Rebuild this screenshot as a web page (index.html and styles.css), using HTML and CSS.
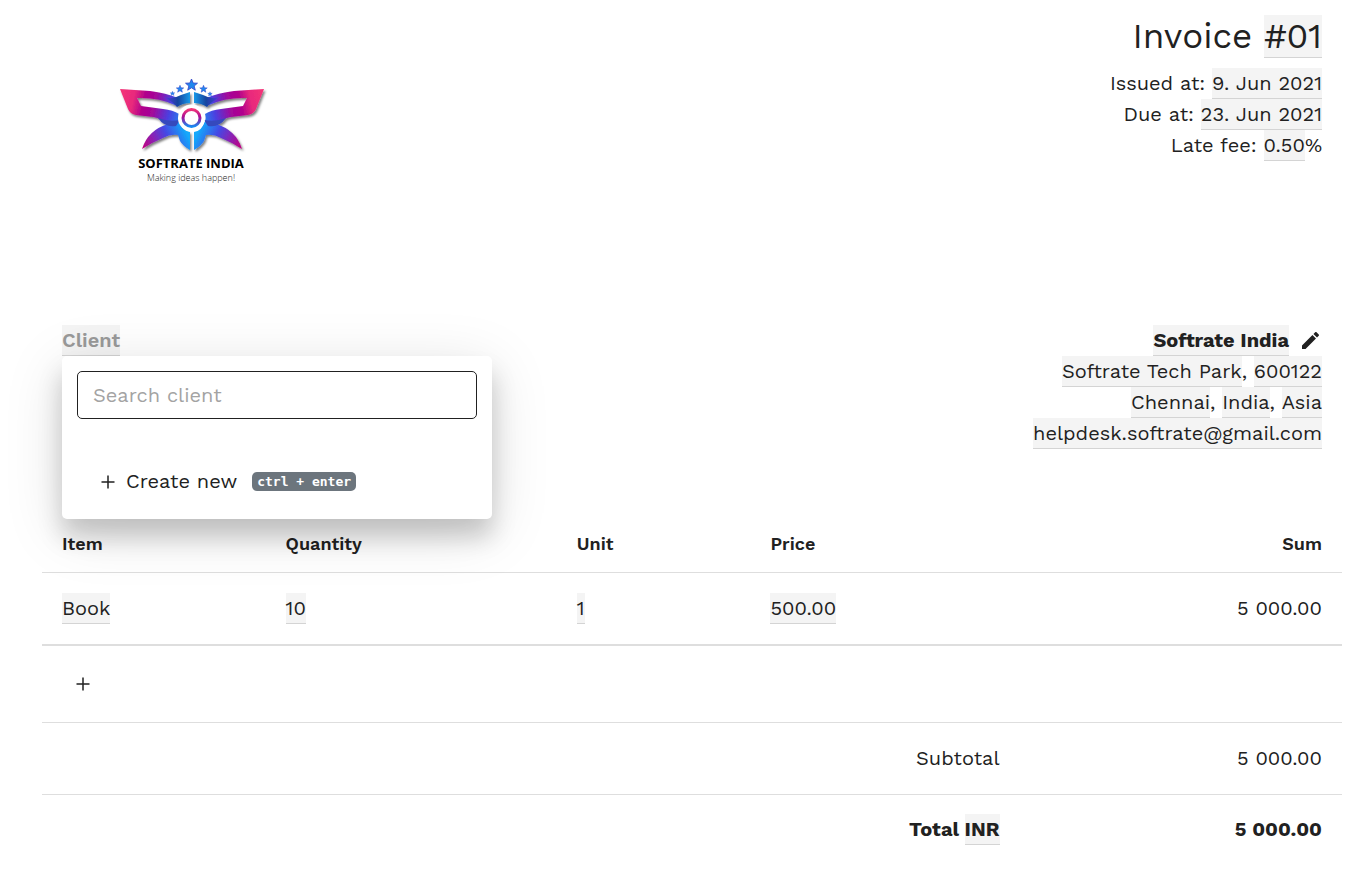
FILE: index.html
```html
<!DOCTYPE html>
<html lang="en">
<head>
<meta charset="utf-8">
<title>Invoice #01</title>
<link rel="stylesheet" href="styles.css">
</head>
<body>
<main class="invoice">
  <header class="top">
    <svg class="logo" viewBox="62 15 260 260" role="img" aria-label="Softrate India logo">
      <defs>
        <linearGradient id="wing" gradientUnits="userSpaceOnUse" x1="120" y1="92" x2="191" y2="108">
          <stop offset="0" stop-color="#f43377"/><stop offset=".2" stop-color="#e82a7c"/><stop offset=".35" stop-color="#b0008c"/><stop offset=".5" stop-color="#a3089a"/><stop offset=".72" stop-color="#4b3fe0"/><stop offset="1" stop-color="#12a5f5"/>
        </linearGradient>
        <linearGradient id="tail" gradientUnits="userSpaceOnUse" x1="143" y1="148" x2="184" y2="128">
          <stop offset="0" stop-color="#c1007e"/><stop offset=".3" stop-color="#8a22b4"/><stop offset=".6" stop-color="#4548e4"/><stop offset="1" stop-color="#12a8fb"/>
        </linearGradient>
        <linearGradient id="crest" gradientUnits="userSpaceOnUse" x1="165" y1="98" x2="191" y2="98">
          <stop offset="0" stop-color="#4b3bd8"/><stop offset=".5" stop-color="#17449f"/><stop offset="1" stop-color="#12a0ef"/>
        </linearGradient>
        <linearGradient id="ring" x1="0" y1="0" x2="0" y2="1">
          <stop offset="0" stop-color="#f03478"/><stop offset=".45" stop-color="#a80d98"/><stop offset="1" stop-color="#1789f2"/>
        </linearGradient>
        <filter id="shade" x="-10%" y="-10%" width="125%" height="130%">
          <feDropShadow dx="1.500" dy="2" stdDeviation="1" flood-color="#000" flood-opacity=".5"/>
        </filter>
        <g id="half">
          <path fill="url(#wing)" d="M120 89 L150 91 Q166 93 178 98 L175 105 Q158 97 137 98 L141 106 L163 109 Q173 110 179 114 Q177 120 181 126 L176 128 Q170 126 165 123 Q160 118 153 117 L136 115 Q130 114 128 109 Z"/>
          <path fill="url(#crest)" d="M164 97 Q172 100 181 95 L190 92 V103 Q183 103 177 107 Q172 101 164 97 Z"/>
          <path fill="url(#tail)" d="M142 149 Q148 130 168 124 L179 121 Q182 131 190 132 V150 Q183 146 180 141 L178 135 Q170 134 163 138 Q153 142 142 149 Z"/>
          <path fill="#3549bd" d="M158 118 Q168 122 180 120 L176 126 Q165 128 158 118 Z"/>
        </g>
        <path id="star" d="M0-6 L1.700-2 L6-1.800 L2.700 1 L3.800 5.200 L0 2.800 L-3.800 5.200 L-2.700 1 L-6-1.800 L-1.700-2 Z"/>
      </defs>
      <g filter="url(#shade)">
        <use href="#half"/>
        <use href="#half" transform="translate(384 0) scale(-1 1)"/>
      </g>
      <circle cx="191.500" cy="118" r="13.500" fill="#fff"/>
      <circle cx="191.500" cy="118" r="8.500" fill="none" stroke="url(#ring)" stroke-width="3"/>
      <g fill="#2086ee" stroke="#3441c7" stroke-width=".8">
        <use href="#star" transform="translate(191.500 85)"/>
        <use href="#star" transform="translate(180 89) scale(.62)"/>
        <use href="#star" transform="translate(203.500 89) scale(.62)"/>
        <use href="#star" transform="translate(172.500 93.500) scale(.38)"/>
        <use href="#star" transform="translate(210 94) scale(.38)"/>
      </g>
      <text class="logo-name" x="191" y="168">SOFTRATE INDIA</text>
      <text class="logo-motto" x="191" y="181">Making ideas happen!</text>
    </svg>
    <div class="meta">
      <h1 class="title">Invoice <span class="edit">#01</span></h1>
      <p>Issued at: <span class="edit">9. Jun 2021</span></p>
      <p>Due at: <span class="edit">23. Jun 2021</span></p>
      <p>Late fee: <span class="edit">0.50</span>%</p>
    </div>
  </header>

  <section class="parties">
    <div class="client">
      <button class="edit client-toggle" type="button">Client</button>
      <div class="popover">
        <input class="search" type="text" placeholder="Search client" aria-label="Search client">
        <button class="create" type="button">
          <svg class="plus" viewBox="0 0 14 14" aria-hidden="true"><path d="M7 0.500V13.500M0.500 7H13.500"/></svg>
          <span>Create new</span>
          <kbd class="keys">ctrl + enter</kbd>
        </button>
      </div>
    </div>
    <address class="supplier">
      <p class="company"><strong class="edit">Softrate India</strong>
        <button class="pencil" type="button" aria-label="Edit supplier"><svg viewBox="3 3 18 18" aria-hidden="true"><path d="M3 17.250V21h3.750L17.810 9.940l-3.750-3.750L3 17.250zM20.710 7.040c.39-.39.39-1.020 0-1.410l-2.340-2.340c-.39-.39-1.020-.39-1.410 0l-1.830 1.830 3.750 3.750 1.830-1.830z"/></svg></button>
      </p>
      <p><span class="edit">Softrate Tech Park</span>, <span class="edit">600122</span></p>
      <p><span class="edit">Chennai</span>, <span class="edit">India</span>, <span class="edit">Asia</span></p>
      <p><span class="edit">helpdesk.softrate@gmail.com</span></p>
    </address>
  </section>

  <table class="items">
    <colgroup><col class="c-item"><col class="c-qty"><col class="c-unit"><col class="c-price"><col></colgroup>
    <thead>
      <tr><th>Item</th><th>Quantity</th><th>Unit</th><th>Price</th><th class="num">Sum</th></tr>
    </thead>
    <tbody>
      <tr>
        <td><span class="edit">Book</span></td>
        <td><span class="edit">10</span></td>
        <td><span class="edit">1</span></td>
        <td><span class="edit">500.00</span></td>
        <td class="num">5 000.00</td>
      </tr>
    </tbody>
    <tfoot>
      <tr class="add-row"><td colspan="5"><button class="add" type="button" aria-label="Add item"><svg class="plus" viewBox="0 0 14 14" aria-hidden="true"><path d="M7 0.500V13.500M0.500 7H13.500"/></svg></button></td></tr>
      <tr><td class="num" colspan="4">Subtotal</td><td class="num">5 000.00</td></tr>
      <tr class="total"><td class="num" colspan="4">Total <span class="edit">INR</span></td><td class="num">5 000.00</td></tr>
    </tfoot>
  </table>
</main>
</body>
</html>
```
FILE: styles.css
```css
* { box-sizing: border-box; }

body {
  margin: 0;
  background: #fff;
  color: #212121;
  font: 400 20px/31px "Work Sans", Inter, "Open Sans", sans-serif;
}

button, input { font: inherit; color: inherit; }
button { background: none; border: 0; padding: 0; cursor: pointer; }
p, h1 { margin: 0; }

.invoice { padding: 15px 7px 20px 42px; }

.edit {
  display: inline-block;
  background: #f4f4f4;
  box-shadow: inset 0 -1px #d4d4d4;
}

.top {
  display: flex;
  justify-content: space-between;
  align-items: flex-start;
  padding: 0 20px;
  margin-bottom: 50px;
}
.logo { width: 260px; height: 260px; }
.logo-name, .logo-motto { font-family: "Open Sans", sans-serif; text-anchor: middle; }
.logo-name { font-size: 13px; font-weight: 700; fill: #000; }
.logo-motto { font-size: 9px; font-weight: 300; fill: #222; }

.meta, .supplier { text-align: right; }
.title { font-size: 35px; line-height: 43px; font-weight: 400; margin-bottom: 10px; }

.parties {
  display: flex;
  justify-content: space-between;
  padding: 0 20px;
  margin-bottom: 66px;
}
.supplier { font-style: normal; }
.supplier strong { font-weight: 700; }
.company { display: flex; justify-content: flex-end; align-items: center; gap: 13px; }
.pencil { display: flex; padding-right: 3px; }
.pencil svg { width: 17px; height: 17px; fill: #212121; }

.client { position: relative; }
.client-toggle { font-weight: 600; color: #999; display: block; }
.popover {
  position: absolute;
  top: 31px;
  left: 0;
  width: 430px;
  padding: 15px;
  background: #fff;
  border-radius: 5px;
  box-shadow: 0 18px 25px rgba(0, 0, 0, .18), 0 12px 60px rgba(0, 0, 0, .13);
}
.search {
  display: block;
  width: 100%;
  height: 48px;
  padding: 0 15px;
  border: 1px solid #212121;
  border-radius: 5px;
  background: #fff;
  outline: 0;
}
.search::placeholder { color: #a3a3a3; opacity: 1; }
.create {
  display: flex;
  align-items: center;
  gap: 11px;
  margin: 47px 0 7px 24px;
}
.plus { width: 14px; height: 14px; fill: none; stroke: #212121; stroke-width: 1.500; }
.keys {
  margin-left: 4px;
  padding: 0 5px;
  border-radius: 5px;
  background: #6c757d;
  color: #fff;
  font: 700 13px/19px "DejaVu Sans Mono", monospace;
}

.items { width: 100%; table-layout: fixed; border-collapse: collapse; }
.c-item { width: 17.200%; }
.c-qty { width: 22.400%; }
.c-unit { width: 14.900%; }
.c-price { width: 20.700%; }
.items th {
  padding: 15px 20px;
  font-size: 18px;
  line-height: 27px;
  font-weight: 600;
  text-align: left;
}
.items td { padding: 20px; border-top: 1px solid #dedede; }
.items .add-row td { padding: 22px 20px; border-top-width: 2px; }
.items .num { text-align: right; }
.add { display: flex; align-items: center; height: 32px; padding: 0 14px; }
.items .total td { padding: 19px 20px; font-weight: 700; }
```
